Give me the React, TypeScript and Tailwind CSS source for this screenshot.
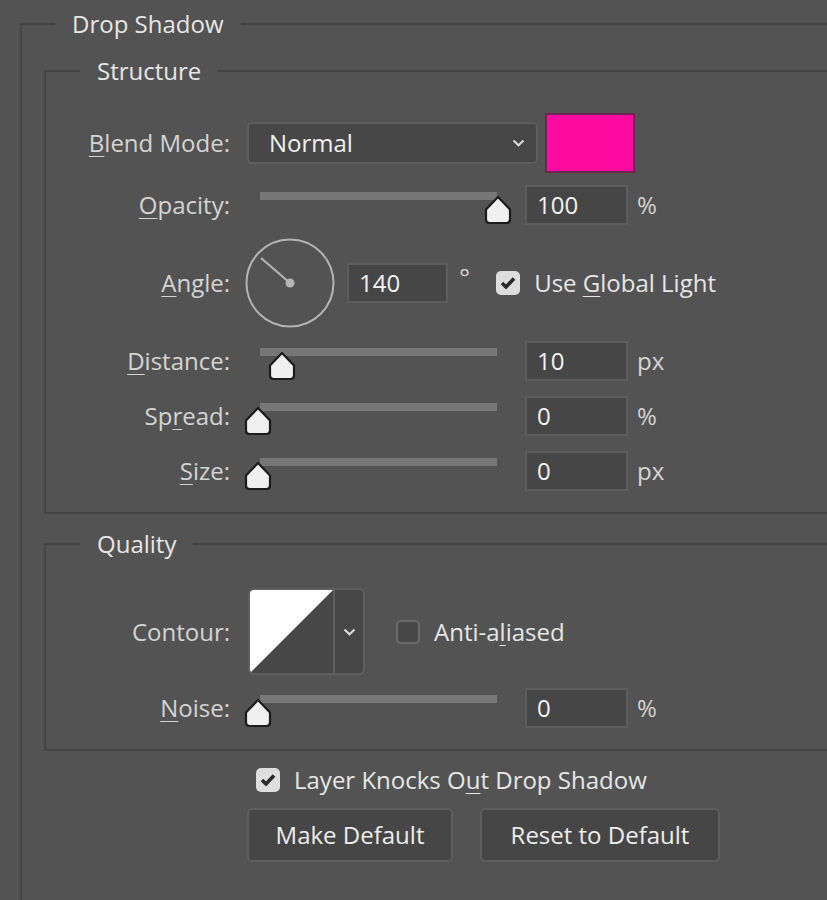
import React from "react";

const FONT = { fontFamily: '"Open Sans", "Noto Sans", sans-serif' };

function U({ children }: { children: React.ReactNode }) {
  return <span className="underline decoration-1 underline-offset-[4px]">{children}</span>;
}

function Label({ children }: { children: React.ReactNode }) {
  return <div className="w-[184px] shrink-0 whitespace-nowrap text-right">{children}</div>;
}

function Thumb() {
  return (
    <svg width="28" height="30" viewBox="0 0 28 30">
      <path
        d="M14 2 L26 14.5 L26 24.5 Q26 28 22.5 28 L5.5 28 Q2 28 2 24.5 L2 14.5 Z"
        fill="#f0f0f0"
        stroke="#1c1c1c"
        strokeWidth="2.2"
        strokeLinejoin="round"
      />
    </svg>
  );
}

function Slider({ value, top = 7 }: { value: number; top?: number }) {
  return (
    <div className="relative ml-[16px] h-[40px] w-[265px] shrink-0" style={{ paddingTop: top }}>
      <div className="ml-[14px] h-[8px] w-[237px] bg-[#777777]" />
      <div className="absolute" style={{ left: value * 2.4 - 2, top: top + 3 }}>
        <Thumb />
      </div>
    </div>
  );
}

function NumBox({ value, w = 103 }: { value: string; w?: number }) {
  return (
    <div
      className="flex h-[40px] shrink-0 items-center border-2 border-[#5d5d5d] bg-[#464646] pl-[10px] text-[#f2f2f2]"
      style={{ width: w }}
    >
      {value}
    </div>
  );
}

function SliderRow({
  label,
  value,
  text,
  unit,
  className = "",
}: {
  label: React.ReactNode;
  value: number;
  text: string;
  unit: string;
  className?: string;
}) {
  return (
    <div className={`flex h-[40px] items-center ${className}`}>
      <Label>{label}</Label>
      <Slider value={value} />
      <div className="ml-[14px]">
        <NumBox value={text} />
      </div>
      <div className="ml-[9px]">{unit}</div>
    </div>
  );
}

function Check({ on }: { on: boolean }) {
  if (!on)
    return <div className="h-[24px] w-[24px] shrink-0 rounded-[5px] border-2 border-[#6b6b6b] bg-[#474747]" />;
  return (
    <div className="flex h-[24px] w-[24px] shrink-0 items-center justify-center rounded-[5px] bg-[#dedede]">
      <svg width="16" height="14" viewBox="0 0 16 14">
        <path d="M2 7 L6 11 L14 2.5" fill="none" stroke="#2a2a2a" strokeWidth="3.6" strokeLinejoin="miter" />
      </svg>
    </div>
  );
}

function Chevron() {
  return (
    <svg width="13" height="8" viewBox="0 0 13 8">
      <path d="M1.5 1.5 L6.5 6.3 L11.5 1.5" fill="none" stroke="#dcdcdc" strokeWidth="2" />
    </svg>
  );
}

function Group({
  title,
  legendMl,
  className = "",
  children,
}: {
  title: string;
  legendMl: number;
  className?: string;
  children: React.ReactNode;
}) {
  return (
    <fieldset className={`border-2 border-[#444444] ${className}`}>
      <legend className="h-[32px] px-[17px] leading-[32px] text-[#e6e6e6]" style={{ marginLeft: legendMl }}>
        {title}
      </legend>
      {children}
    </fieldset>
  );
}

export default function App() {
  return (
    <div
      className="h-[900px] w-[827px] overflow-hidden bg-[#535353] pt-[8px] text-[24px] text-[#d4d4d4]"
      style={FONT}
    >
      <Group title="Drop Shadow" legendMl={33} className="ml-[20px] w-[900px]">
        <div className="pl-[22px]">
          <Group title="Structure" legendMl={34} className="mt-[15px] w-[900px] pb-[21px] pt-[26px]">
            {/* Blend mode */}
            <div className="flex h-[60px] items-center">
              <Label>
                <U>B</U>lend Mode:
              </Label>
              <div className="ml-[17px] flex h-[42px] w-[291px] items-center justify-between rounded-[5px] border-2 border-[#5e5e5e] bg-[#474747] pl-[20px] pr-[11px] text-[#f0f0f0]">
                <span>Normal</span>
                <Chevron />
              </div>
              <div className="ml-[7px] h-[60px] w-[90px] border-2 border-[#6c2651] bg-[#ff0aa0]" />
            </div>

            <SliderRow
              className="mt-[12px]"
              label={
                <>
                  <U>O</U>pacity:
                </>
              }
              value={100}
              text="100"
              unit="%"
            />

            {/* Angle */}
            <div className="mt-[13px] flex h-[90px] items-center">
              <Label>
                <U>A</U>ngle:
              </Label>
              <svg className="ml-[15px] shrink-0" width="90" height="90" viewBox="0 0 90 90">
                <circle cx="45" cy="45" r="43.5" fill="none" stroke="#b4b4b4" strokeWidth="2" />
                <line x1="45" y1="45" x2="16" y2="20" stroke="#b4b4b4" strokeWidth="2.2" />
                <circle cx="45" cy="45" r="4.5" fill="#b4b4b4" />
              </svg>
              <div className="ml-[12px]">
                <NumBox value="140" w={101} />
              </div>
              <div className="ml-[11px] mt-[-12px] text-[26px]">°</div>
              <div className="ml-[26px]">
                <Check on />
              </div>
              <div className="ml-[14px] text-[#e6e6e6]">
                Use <U>G</U>lobal Light
              </div>
            </div>

            <SliderRow
              className="mt-[13px]"
              label={
                <>
                  <U>D</U>istance:
                </>
              }
              value={10}
              text="10"
              unit="px"
            />
            <SliderRow
              className="mt-[15px]"
              label={
                <>
                  Sp<U>r</U>ead:
                </>
              }
              value={0}
              text="0"
              unit="%"
            />
            <SliderRow
              className="mt-[15px]"
              label={
                <>
                  <U>S</U>ize:
                </>
              }
              value={0}
              text="0"
              unit="px"
            />
          </Group>

          <Group title="Quality" legendMl={34} className="mt-[14px] w-[900px] pb-[21px] pt-[28px]">
            <div className="flex h-[87px] items-center">
              <Label>Contour:</Label>
              <div className="ml-[18px] flex h-[87px] w-[117px] overflow-hidden rounded-[6px] border-2 border-[#5f5f5f]">
                <svg width="83" height="83" viewBox="0 0 83 83" className="shrink-0">
                  <rect width="83" height="83" fill="#474747" />
                  <path d="M0 0 L83 0 L0 83 Z" fill="#ffffff" />
                </svg>
                <div className="flex flex-1 items-center justify-center border-l-2 border-[#5f5f5f] bg-[#474747]">
                  <Chevron />
                </div>
              </div>
              <div className="ml-[31px]">
                <Check on={false} />
              </div>
              <div className="ml-[14px] text-[#e6e6e6]">
                Anti-a<U>l</U>iased
              </div>
            </div>
            <SliderRow
              className="mt-[13px]"
              label={
                <>
                  <U>N</U>oise:
                </>
              }
              value={0}
              text="0"
              unit="%"
            />
          </Group>

          <div className="ml-[212px] mt-[16px] flex h-[26px] items-center">
            <Check on />
            <div className="ml-[14px] text-[#e6e6e6]">
              Layer Knocks O<U>u</U>t Drop Shadow
            </div>
          </div>

          <div className="ml-[203px] mt-[15px] flex gap-[27px]">
            <button className="h-[54px] w-[206px] rounded-[5px] border-2 border-[#5e5e5e] bg-[#464646] text-[#ededed]">
              Make Default
            </button>
            <button className="h-[54px] w-[240px] rounded-[5px] border-2 border-[#5e5e5e] bg-[#464646] text-[#ededed]">
              Reset to Default
            </button>
          </div>
          <div className="h-[60px]" />
        </div>
      </Group>
    </div>
  );
}
